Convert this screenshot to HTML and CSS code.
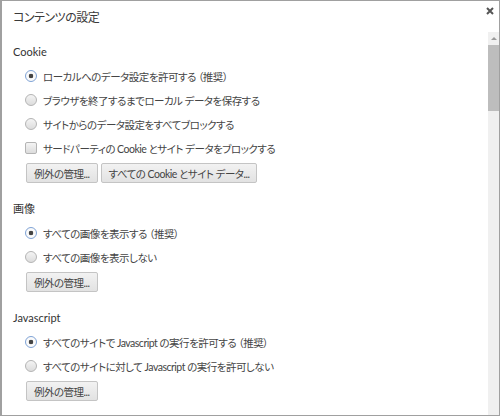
FILE: index.html
```html
<!DOCTYPE html>
<html lang="ja">
<head>
    <meta charset="UTF-8">
    <title>コンテンツの設定</title>
    <link rel="stylesheet" href="styles.css">
</head>
<body>
    <div class="dialog">
        <div class="dialog-header">
            <h1 class="dialog-title">コンテンツの設定</h1>
            <button class="close-btn" title="閉じる">
                <svg width="8" height="8" viewBox="0 0 8 8"><path d="M1 1L7 7M7 1L1 7" stroke="#555" stroke-width="2"/></svg>
            </button>
        </div>
        <div class="dialog-body">
            <div class="content">
                <section class="section">
                    <h3 class="section-title">Cookie</h3>
                    <label class="option"><input type="radio" name="cookie" checked><span>ローカルへのデータ設定を許可する （推奨）</span></label>
                    <label class="option"><input type="radio" name="cookie"><span>ブラウザを終了するまでローカル データを保存する</span></label>
                    <label class="option"><input type="radio" name="cookie"><span>サイトからのデータ設定をすべてブロックする</span></label>
                    <label class="option"><input type="checkbox"><span>サードパーティの Cookie とサイト データをブロックする</span></label>
                    <div class="btn-row">
                        <button>例外の管理...</button>
                        <button>すべての Cookie とサイト データ...</button>
                    </div>
                </section>
                <section class="section">
                    <h3 class="section-title">画像</h3>
                    <label class="option"><input type="radio" name="images" checked><span>すべての画像を表示する （推奨）</span></label>
                    <label class="option"><input type="radio" name="images"><span>すべての画像を表示しない</span></label>
                    <div class="btn-row">
                        <button>例外の管理...</button>
                    </div>
                </section>
                <section class="section">
                    <h3 class="section-title">Javascript</h3>
                    <label class="option"><input type="radio" name="js" checked><span>すべてのサイトで Javascript の実行を許可する （推奨）</span></label>
                    <label class="option"><input type="radio" name="js"><span>すべてのサイトに対して Javascript の実行を許可しない</span></label>
                    <div class="btn-row">
                        <button>例外の管理...</button>
                    </div>
                </section>
            </div>
            <div class="scrollbar">
                <div class="scroll-up"></div>
                <div class="scroll-thumb"></div>
                <div class="scroll-track"></div>
            </div>
        </div>
    </div>
</body>
</html>
```

FILE: styles.css
```css
* {
    box-sizing: border-box;
}

html, body {
    margin: 0;
}

body {
    width: 500px;
    height: 416px;
    overflow: hidden;
    background: #fff;
    font-family: "Lato", "Noto Sans CJK JP", sans-serif;
    font-size: 10.5px;
    font-feature-settings: "palt";
    letter-spacing: -0.5px;
    color: #444;
}

.dialog {
    height: 416px;
    border: 1px solid #a0a0a0;
    border-left-width: 2px;
    display: flex;
    flex-direction: column;
}

.dialog-header {
    height: 31px;
    flex: none;
    display: flex;
    justify-content: space-between;
    align-items: center;
    padding-left: 11px;
}

.dialog-title {
    margin: 0;
    font-size: 12px;
    font-weight: normal;
    color: #3a3a3a;
}

.close-btn {
    align-self: flex-start;
    width: 14px;
    height: 14px;
    margin: 3px 2px 0 0;
    padding: 0;
    border: none;
    background: none;
    display: flex;
    justify-content: center;
    align-items: center;
}

.dialog-body {
    flex: 1;
    display: flex;
    min-height: 0;
}

.content {
    flex: 1;
    padding: 8px 0 0 11px;
}

.section {
    margin-bottom: 14px;
}

.section-title {
    margin: 0;
    height: 24px;
    line-height: 24px;
    font-size: 11px;
    font-weight: normal;
    letter-spacing: 0;
    color: #333;
}

.option {
    height: 24px;
    display: flex;
    align-items: center;
    padding-left: 12px;
}

.option input {
    -webkit-appearance: none;
    appearance: none;
    width: 12px;
    height: 12px;
    margin: 0 6px 0 0;
    border: 1px solid #b4b4b4;
    background: linear-gradient(#f4f4f4, #dcdcdc);
}

.option input[type="radio"] {
    border-radius: 50%;
}

.option input[type="radio"]:checked {
    border-color: #7fa3d6;
    background: radial-gradient(circle, #444 0, #444 2px, #fafafa 2.6px);
}

.option input[type="checkbox"] {
    border-radius: 2px;
}

.btn-row {
    display: flex;
    gap: 3px;
    margin: 3px 0 0 13px;
}

.btn-row button {
    height: 20px;
    padding: 0 7px;
    font-family: inherit;
    font-size: 10.5px;
    font-feature-settings: "palt";
    letter-spacing: -0.5px;
    color: #444;
    border: 1px solid #c4c4c4;
    border-radius: 2px;
    background: linear-gradient(#f2f2f2, #e2e2e2);
}

.scrollbar {
    width: 11px;
    flex: none;
    display: flex;
    flex-direction: column;
}

.scroll-up {
    height: 13px;
    background: #f0f0f0;
    display: flex;
    justify-content: center;
    align-items: center;
}

.scroll-up::before {
    content: "";
    border-left: 3px solid transparent;
    border-right: 3px solid transparent;
    border-bottom: 3px solid #9a9a9a;
}

.scroll-thumb {
    height: 66px;
    background: #bdbdbd;
}

.scroll-track {
    flex: 1;
    background: #f0f0f0;
}
```
